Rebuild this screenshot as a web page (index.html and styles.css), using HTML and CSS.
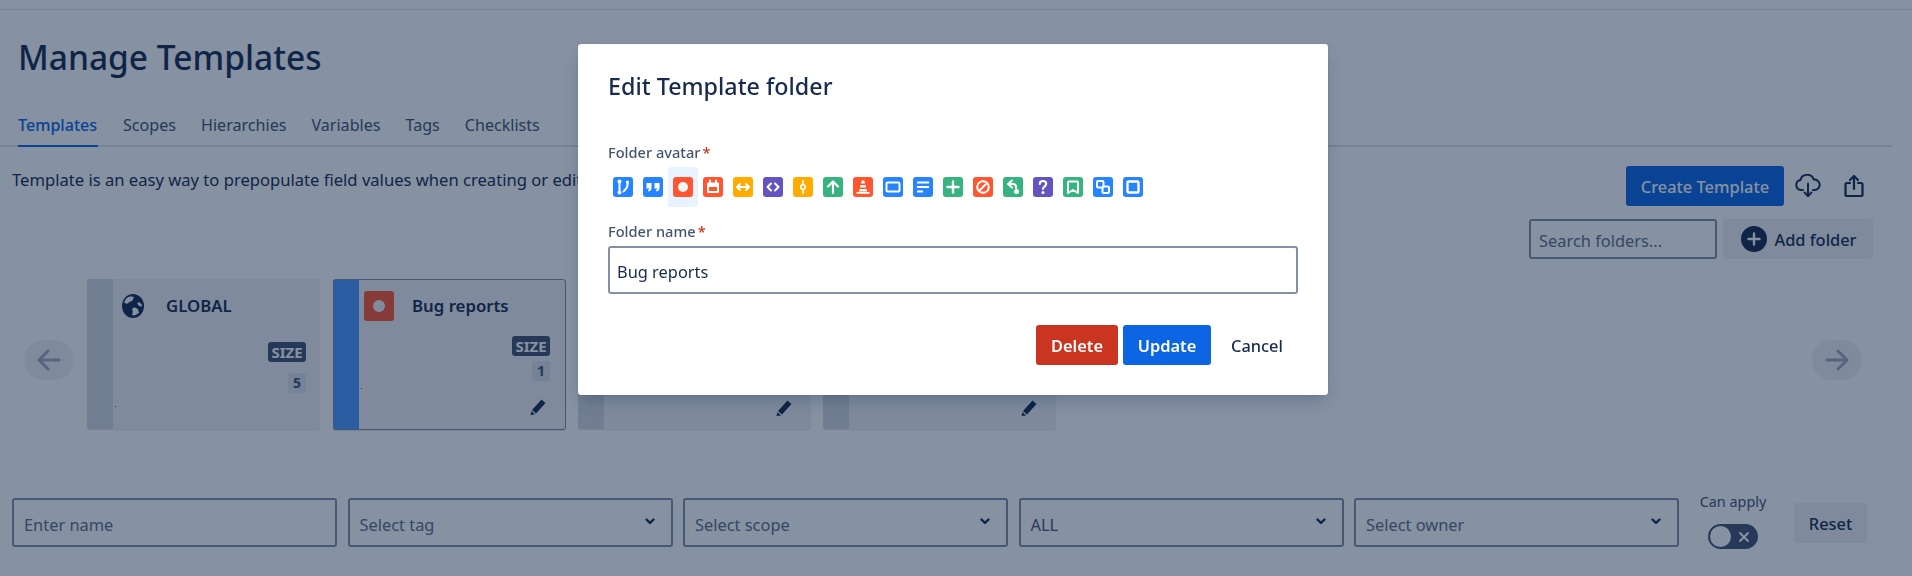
FILE: index.html
```html
<!DOCTYPE html>
<html lang="en">
<head>
<meta charset="utf-8">
<title>Manage Templates</title>
<link rel="stylesheet" href="styles.css">
</head>
<body>
<div class="page">
  <div class="topbar"></div>
  <h1 class="title">Manage Templates</h1>
  <nav class="tabs">
    <a class="tab active">Templates</a><a class="tab">Scopes</a><a class="tab">Hierarchies</a><a class="tab">Variables</a><a class="tab">Tags</a><a class="tab">Checklists</a>
  </nav>
  <div class="intro">
    <p class="desc">Template is an easy way to prepopulate field values when creating or editing issues.</p>
    <div class="actions">
      <button class="btn primary">Create Template</button>
      <button class="icon-btn cloud-btn" aria-label="Download">
        <svg width="28" height="24" viewBox="0 0 28 24" fill="none" stroke="#172B4D" stroke-width="2" stroke-linecap="round" stroke-linejoin="round"><path d="M9 16H7a5 5 0 0 1-.6-9.900A7 7 0 0 1 19.800 5.600 5.200 5.200 0 0 1 21 16h-2"/><path d="M14 9.500V22"/><path d="M10.500 18.500 14 22l3.500-3.500"/></svg>
      </button>
      <button class="icon-btn" aria-label="Share">
        <svg width="20" height="24" viewBox="0 0 20 24" fill="none" stroke="#172B4D" stroke-width="2.200" stroke-linecap="round" stroke-linejoin="round"><path d="M6 9H3a1.500 1.500 0 0 0-1.500 1.500v10A1.500 1.500 0 0 0 3 22h14a1.500 1.500 0 0 0 1.500-1.500v-10A1.500 1.500 0 0 0 17 9h-3"/><path d="M10 15V2"/><path d="M6 6l4-4 4 4"/></svg>
      </button>
    </div>
  </div>
  <div class="folder-tools">
    <div class="field search"><span class="placeholder">Search folders...</span></div>
    <button class="btn subtle add">
      <svg width="26" height="26" viewBox="0 0 26 26"><circle cx="13" cy="13" r="13" fill="#172B4D"/><path d="M13 7.500v11M7.500 13h11" stroke="#fff" stroke-width="2.400" stroke-linecap="round"/></svg>
      Add folder
    </button>
  </div>
  <div class="carousel">
    <button class="arrow" aria-label="Previous"><svg width="26" height="24" viewBox="0 0 26 24" fill="none" stroke="#42526E" stroke-width="3" stroke-linecap="round" stroke-linejoin="round"><path d="M23 12H3M12 3l-9 9 9 9"/></svg></button>
    <div class="cards">
      <article class="card">
        <div class="stripe"></div>
        <div class="card-body">
          <div class="card-head global">
            <svg class="globe" width="22" height="24" viewBox="0 0 22 24"><ellipse cx="11" cy="12" rx="11" ry="12" fill="#172B4D"/><path d="M7 2.800C4.500 3.800 2.800 6 2.200 9l3 .8L7.500 8l3-1.500L12 3c-1.500-.6-3.300-.7-5-.2zM10 21.300c2.500.3 5-.6 7-2.500l-1-3.500-3.500-2-2.500 1.500.8 3.200zM19.800 10.500 17 8l-1.800 1.500 2 2.500 2.600.5z" fill="#fff"/></svg>
            <span class="card-title">GLOBAL</span>
          </div>
          <div class="meta meta-global">
            <span class="badge">SIZE</span>
            <span class="count count-global">5</span>
          </div>
          <span class="dot dot-global"></span>
        </div>
      </article>
      <article class="card selected">
        <div class="stripe"></div>
        <div class="card-body">
          <div class="card-head">
            <span class="bug-avatar"><span></span></span>
            <span class="card-title">Bug reports</span>
          </div>
          <div class="meta">
            <span class="badge">SIZE</span>
            <span class="count">1</span>
            <svg class="pencil" width="16" height="16" viewBox="0 0 16 16"><path d="M11.500 0.500 15.500 4 6 14.500 2 11zM1.500 12 5 15.500 0.500 16z" fill="#172B4D"/></svg>
          </div>
          <span class="dot"></span>
        </div>
      </article>
      <article class="card">
        <div class="stripe"></div>
        <div class="card-body pushed">
          <svg class="pencil" width="16" height="16" viewBox="0 0 16 16"><path d="M11.500 0.500 15.500 4 6 14.500 2 11zM1.500 12 5 15.500 0.500 16z" fill="#172B4D"/></svg>
        </div>
      </article>
      <article class="card">
        <div class="stripe"></div>
        <div class="card-body pushed">
          <svg class="pencil" width="16" height="16" viewBox="0 0 16 16"><path d="M11.500 0.500 15.500 4 6 14.500 2 11zM1.500 12 5 15.500 0.500 16z" fill="#172B4D"/></svg>
        </div>
      </article>
    </div>
    <button class="arrow" aria-label="Next"><svg width="26" height="24" viewBox="0 0 26 24" fill="none" stroke="#42526E" stroke-width="3" stroke-linecap="round" stroke-linejoin="round"><path d="M3 12h20M14 3l9 9-9 9"/></svg></button>
  </div>
  <div class="filters">
    <div class="filter-grid">
      <div class="field"><span class="placeholder">Enter name</span></div>
      <div class="field select"><span class="placeholder">Select tag</span><svg class="chev" width="12" height="8" viewBox="0 0 12 8" fill="none" stroke="#172B4D" stroke-width="2.400" stroke-linecap="round" stroke-linejoin="round"><path d="M2.500 2.500 6 6l3.500-3.500"/></svg></div>
      <div class="field select"><span class="placeholder">Select scope</span><svg class="chev" width="12" height="8" viewBox="0 0 12 8" fill="none" stroke="#172B4D" stroke-width="2.400" stroke-linecap="round" stroke-linejoin="round"><path d="M2.500 2.500 6 6l3.500-3.500"/></svg></div>
      <div class="field select"><span class="value">ALL</span><svg class="chev" width="12" height="8" viewBox="0 0 12 8" fill="none" stroke="#172B4D" stroke-width="2.400" stroke-linecap="round" stroke-linejoin="round"><path d="M2.500 2.500 6 6l3.500-3.500"/></svg></div>
      <div class="field select"><span class="placeholder">Select owner</span><svg class="chev" width="12" height="8" viewBox="0 0 12 8" fill="none" stroke="#172B4D" stroke-width="2.400" stroke-linecap="round" stroke-linejoin="round"><path d="M2.500 2.500 6 6l3.500-3.500"/></svg></div>
    </div>
    <div class="can-apply">
      <span class="can-label">Can apply</span>
      <span class="toggle"><span class="knob"></span><svg width="12" height="12" viewBox="0 0 12 12" stroke="#fff" stroke-width="2" stroke-linecap="round"><path d="M2 2l8 8M10 2l-8 8"/></svg></span>
    </div>
    <button class="btn subtle reset">Reset</button>
  </div>
</div>

<div class="overlay"></div>
<div class="modal" role="dialog">
  <h2 class="modal-title">Edit Template folder</h2>
  <label class="label">Folder avatar<span class="req">*</span></label>
  <div class="avatars">
    <button class="av"><svg viewBox="0 0 20 20"><rect width="20" height="20" rx="3" fill="#2684FF"/><g fill="none" stroke="#fff" stroke-width="2" stroke-linecap="round"><path d="M6.500 5v10"/><path d="M14.500 5v3c0 3-2 4-4 6.500"/></g><circle cx="6.500" cy="4.500" r="2" fill="#fff"/><circle cx="6.500" cy="15.500" r="2" fill="#fff"/><circle cx="14.500" cy="5" r="1.600" fill="#fff"/></svg></button>
    <button class="av"><svg viewBox="0 0 20 20"><rect width="20" height="20" rx="3" fill="#2684FF"/><path d="M3.500 6h5v4.500c0 2.200-1 3.500-3 4l-.6-1.300c.9-.4 1.300-1 1.300-1.700H3.500zM11.500 6h5v4.500c0 2.200-1 3.500-3 4l-.6-1.300c.9-.4 1.300-1 1.300-1.700h-2.700z" fill="#fff"/></svg></button>
    <button class="av on"><svg viewBox="0 0 20 20"><rect width="20" height="20" rx="3" fill="#FF5630"/><circle cx="10" cy="10" r="5" fill="#F4F5F7"/></svg></button>
    <button class="av"><svg viewBox="0 0 20 20"><rect width="20" height="20" rx="3" fill="#FF5630"/><path d="M5 5.500h10a1 1 0 0 1 1 1V15a1 1 0 0 1-1 1H5a1 1 0 0 1-1-1V6.500a1 1 0 0 1 1-1zM6 10v4h8v-4z" fill="#fff" fill-rule="evenodd"/><path d="M7 3.500v3M13 3.500v3" stroke="#fff" stroke-width="2" stroke-linecap="round"/></svg></button>
    <button class="av"><svg viewBox="0 0 20 20"><rect width="20" height="20" rx="3" fill="#FFAB00"/><path d="M5 10h10M7 7l-3 3 3 3M13 7l3 3-3 3" fill="none" stroke="#fff" stroke-width="2" stroke-linecap="round" stroke-linejoin="round"/></svg></button>
    <button class="av"><svg viewBox="0 0 20 20"><rect width="20" height="20" rx="3" fill="#6554C0"/><path d="M8 6.500 4.500 10 8 13.500M12 6.500l3.500 3.500-3.500 3.500" fill="none" stroke="#fff" stroke-width="2" stroke-linecap="round" stroke-linejoin="round"/></svg></button>
    <button class="av"><svg viewBox="0 0 20 20"><rect width="20" height="20" rx="3" fill="#FFAB00"/><path d="M10 3.500v13" stroke="#fff" stroke-width="1.600" stroke-linecap="round"/><circle cx="10" cy="10" r="2.300" fill="#FFAB00" stroke="#fff" stroke-width="1.600"/></svg></button>
    <button class="av"><svg viewBox="0 0 20 20"><rect width="20" height="20" rx="3" fill="#36B37E"/><path d="M10 16V5M5 9.500 10 4.500l5 5" fill="none" stroke="#fff" stroke-width="2.200" stroke-linecap="round" stroke-linejoin="round"/></svg></button>
    <button class="av"><svg viewBox="0 0 20 20"><rect width="20" height="20" rx="3" fill="#FF5630"/><path d="M8.700 3.500h2.600l.7 3H8zM7.500 8h5l.6 2.500H6.900zM6.500 12h7l.7 2.500H5.800zM3.500 15h13v1.800h-13z" fill="#fff"/></svg></button>
    <button class="av"><svg viewBox="0 0 20 20"><rect width="20" height="20" rx="3" fill="#2684FF"/><rect x="3.500" y="5.500" width="13" height="9" rx="1" fill="none" stroke="#fff" stroke-width="2"/></svg></button>
    <button class="av"><svg viewBox="0 0 20 20"><rect width="20" height="20" rx="3" fill="#2684FF"/><path d="M4 5.500h12M4 10h12M4 14.500h6" stroke="#fff" stroke-width="2"/></svg></button>
    <button class="av"><svg viewBox="0 0 20 20"><rect width="20" height="20" rx="3" fill="#36B37E"/><path d="M10 4.500v11M4.500 10h11" stroke="#fff" stroke-width="2.400" stroke-linecap="round"/></svg></button>
    <button class="av"><svg viewBox="0 0 20 20"><rect width="20" height="20" rx="3" fill="#FF5630"/><circle cx="10" cy="10" r="5.800" fill="none" stroke="#fff" stroke-width="2"/><path d="M6 14l8-8" stroke="#fff" stroke-width="2"/></svg></button>
    <button class="av"><svg viewBox="0 0 20 20"><rect width="20" height="20" rx="3" fill="#36B37E"/><path d="M9 3.500 5 7l4 3.500M5.500 7H10c2 0 3 1.200 3 3v1" fill="none" stroke="#fff" stroke-width="2" stroke-linecap="round" stroke-linejoin="round"/><circle cx="13.500" cy="14.500" r="2.500" fill="#fff"/></svg></button>
    <button class="av"><svg viewBox="0 0 20 20"><rect width="20" height="20" rx="3" fill="#6554C0"/><path d="M6.800 7c0-2 1.500-3 3.200-3s3.200 1 3.200 2.800c0 2.700-3.200 2.700-3.200 5" fill="none" stroke="#fff" stroke-width="2.200" stroke-linecap="round"/><circle cx="10" cy="15.500" r="1.500" fill="#fff"/></svg></button>
    <button class="av"><svg viewBox="0 0 20 20"><rect width="20" height="20" rx="3" fill="#36B37E"/><path d="M6 4.500h8a1 1 0 0 1 1 1v10.500l-5-3-5 3V5.500a1 1 0 0 1 1-1z" fill="none" stroke="#fff" stroke-width="2" stroke-linejoin="round"/></svg></button>
    <button class="av"><svg viewBox="0 0 20 20"><rect width="20" height="20" rx="3" fill="#2684FF"/><rect x="4" y="4" width="6.500" height="6.500" rx="1" fill="none" stroke="#fff" stroke-width="2"/><rect x="9.500" y="9.500" width="6.500" height="6.500" rx="1" fill="none" stroke="#fff" stroke-width="2"/></svg></button>
    <button class="av"><svg viewBox="0 0 20 20"><rect width="20" height="20" rx="3" fill="#2684FF"/><rect x="4.500" y="4.500" width="11" height="11" rx="1" fill="none" stroke="#fff" stroke-width="2.400"/></svg></button>
  </div>
  <label class="label name-label">Folder name<span class="req">*</span></label>
  <div class="name-input">Bug reports</div>
  <div class="modal-actions">
    <button class="btn danger">Delete</button>
    <button class="btn primary update">Update</button>
    <button class="btn cancel">Cancel</button>
  </div>
</div>
</body>
</html>
```

FILE: styles.css
```css
* { box-sizing: border-box; }
html, body { margin: 0; padding: 0; height: 576px; overflow: hidden; background: #fff; }
body { font-family: "Noto Sans", "Liberation Sans", sans-serif; font-size: 16.4px; color: #172B4D; }
button { font: inherit; border: 0; background: none; padding: 0; color: inherit; }

.page { display: flex; flex-direction: column; height: 576px; }
.topbar { height: 10px; border-bottom: 1px solid #DFE1E6; flex: none; }

.title { margin: 27px 0 0 18px; font-size: 33.500px; line-height: 40px; font-weight: 500; color: #172B4D; }

.tabs { display: flex; margin: 28px 20px 0 0; height: 42px; padding-left: 18px; gap: 25px; border-bottom: 2px solid #DFE1E6; font-size: 16.100px; flex: none; }
.tab { line-height: 40px; height: 42px; color: #44546F; }
.tab.active { width: 80px; color: #0C66E4; font-weight: 500; border-bottom: 2px solid #0C66E4; white-space: nowrap; }

.intro { display: flex; align-items: flex-start; height: 40px; margin-top: 19px; padding: 0 48px 0 12px; flex: none; }
.desc { margin: 2px 0 0; flex: 1; font-size: 16.600px; line-height: 24px; white-space: nowrap; overflow: hidden; }
.actions { display: flex; align-items: center; height: 40px; }
.btn { display: inline-flex; align-items: center; justify-content: center; height: 40px; padding-top: 1px; border-radius: 3px; font-weight: 500; }
.primary { width: 158px; background: #0C66E4; color: #fff; }
.icon-btn { display: flex; }
.cloud-btn { margin: 0 22px 0 10px; }

.folder-tools { display: flex; justify-content: flex-end; gap: 6px; margin-top: 13px; padding-right: 39px; flex: none; }
.field { display: flex; align-items: center; height: 49px; padding: 4px 10px 0; border: 2px solid #8590A2; border-radius: 3px; background: #fff; }
.search { width: 188px; height: 40px; padding-left: 8px; padding-top: 2px; }
.placeholder { color: #626F86; }
.value { color: #44546F; }
.subtle { background: #F1F2F4; color: #172B4D; }
.add { width: 150px; gap: 7px; padding-top: 0; padding-left: 2px; }

.carousel { display: flex; justify-content: space-between; align-items: flex-start; margin-top: 20px; padding: 0 50px 0 24px; flex: none; }
.arrow { display: flex; align-items: center; justify-content: center; width: 50px; height: 40px; margin-top: 61px; border-radius: 20px; background: #F1F2F4; }
.arrow svg { opacity: .45; }
.cards { display: flex; gap: 12px; flex: 1; margin-left: 13px; }
.card { display: flex; width: 233px; height: 150px; background: #F1F2F4; border-radius: 3px; overflow: hidden; box-shadow: 0 1px 1px rgba(9,30,66,.12); }
.card.selected { height: 151px; margin-left: 1px; outline: 1px solid #8590A2; outline-offset: -1px; }
.stripe { width: 26px; background: #D6DAE0; flex: none; }
.selected .stripe { background: #4C9AFF; }
.card-body { position: relative; flex: 1; display: flex; flex-direction: column; padding: 12px 14px 0 5px; }
.selected .card-body { padding-right: 16px; }
.card-body.pushed { justify-content: flex-end; align-items: flex-end; padding: 0 19px 13px 0; }
.card-head { display: flex; align-items: center; gap: 18px; height: 30px; }
.global { height: 26px; margin-top: 2px; gap: 22px; padding-left: 4px; }
.card-title { font-size: 16.800px; font-weight: 600; color: #172B4D; line-height: 24px; }
.bug-avatar { display: flex; align-items: center; justify-content: center; width: 30px; height: 30px; border-radius: 3px; background: #FF5630; }
.bug-avatar span { width: 12px; height: 12px; border-radius: 50%; background: #F4F5F7; }
.meta { display: flex; flex-direction: column; align-items: flex-end; gap: 5px; margin-top: 15px; }
.meta-global { margin-top: 23px; gap: 11px; }
.badge { width: 38px; height: 20px; border-radius: 3px; background: #42526E; color: #fff; font-size: 15px; font-weight: 700; line-height: 20px; text-align: center; }
.count { width: 18px; height: 20px; border-radius: 3px; background: #DFE1E6; color: #42526E; font-size: 14px; font-weight: 700; line-height: 20px; text-align: center; }
.pencil { flex: none; margin: 13px 4px 0 0; }
.pushed .pencil { margin: 0; }
.dot { position: absolute; left: 2px; top: 109px; width: 1px; height: 1px; background: #42526E; }
.dot-global { top: 127px; }

.filters { display: flex; align-items: flex-start; margin-top: 68px; padding-left: 12px; flex: none; }
.filter-grid { display: grid; grid-template-columns: repeat(5, 325px); gap: 10.500px; flex: none; }
.select { justify-content: space-between; }
.chev { margin: -8px 5px 0 0; }
.can-apply { display: flex; flex-direction: column; align-items: center; width: 70px; margin: -6px 0 0 19px; }
.can-label { font-size: 14.400px; line-height: 20px; color: #44546F; white-space: nowrap; }
.toggle { display: flex; align-items: center; justify-content: space-between; width: 50px; height: 25px; margin-top: 12px; padding: 0 8px 0 2px; border-radius: 13px; background: #44546F; }
.knob { width: 21px; height: 21px; border-radius: 50%; background: #fff; }
.reset { width: 73px; margin: 5px 0 0 26px; }

.overlay { position: fixed; inset: 0; background: rgba(9,30,66,.49); }
.modal { position: fixed; left: 578px; top: 44px; width: 750px; height: 351px; padding: 25px 30px 0; background: #fff; border-radius: 3px; box-shadow: 0 8px 16px -4px rgba(9,30,66,.25), 0 0 1px rgba(9,30,66,.31); display: flex; flex-direction: column; }
.modal-title { margin: 0; font-size: 23.300px; line-height: 35px; font-weight: 500; color: #172B4D; }
.label { margin-top: 39px; font-size: 14.600px; line-height: 18px; font-weight: 500; color: #44546F; }
.req { margin-left: 2px; color: #CA3521; }
.avatars { display: flex; margin-top: 6px; }
.av { display: flex; align-items: center; justify-content: center; width: 30px; height: 40px; border-radius: 3px; }
.av svg { width: 20px; height: 20px; display: block; }
.av.on { background: #E9F2FF; }
.name-label { margin-top: 15px; }
.name-input { display: flex; align-items: center; height: 48px; margin-top: 6px; padding: 2px 7px 0; border: 2px solid #8590A2; border-radius: 3px; color: #172B4D; }
.modal-actions { display: flex; justify-content: flex-end; gap: 5px; margin-top: 31px; }
.danger { width: 82px; background: #CA3521; color: #fff; font-weight: 600; }
.update { width: 88px; font-weight: 600; }
.cancel { width: 82px; color: #172B4D; }
```
